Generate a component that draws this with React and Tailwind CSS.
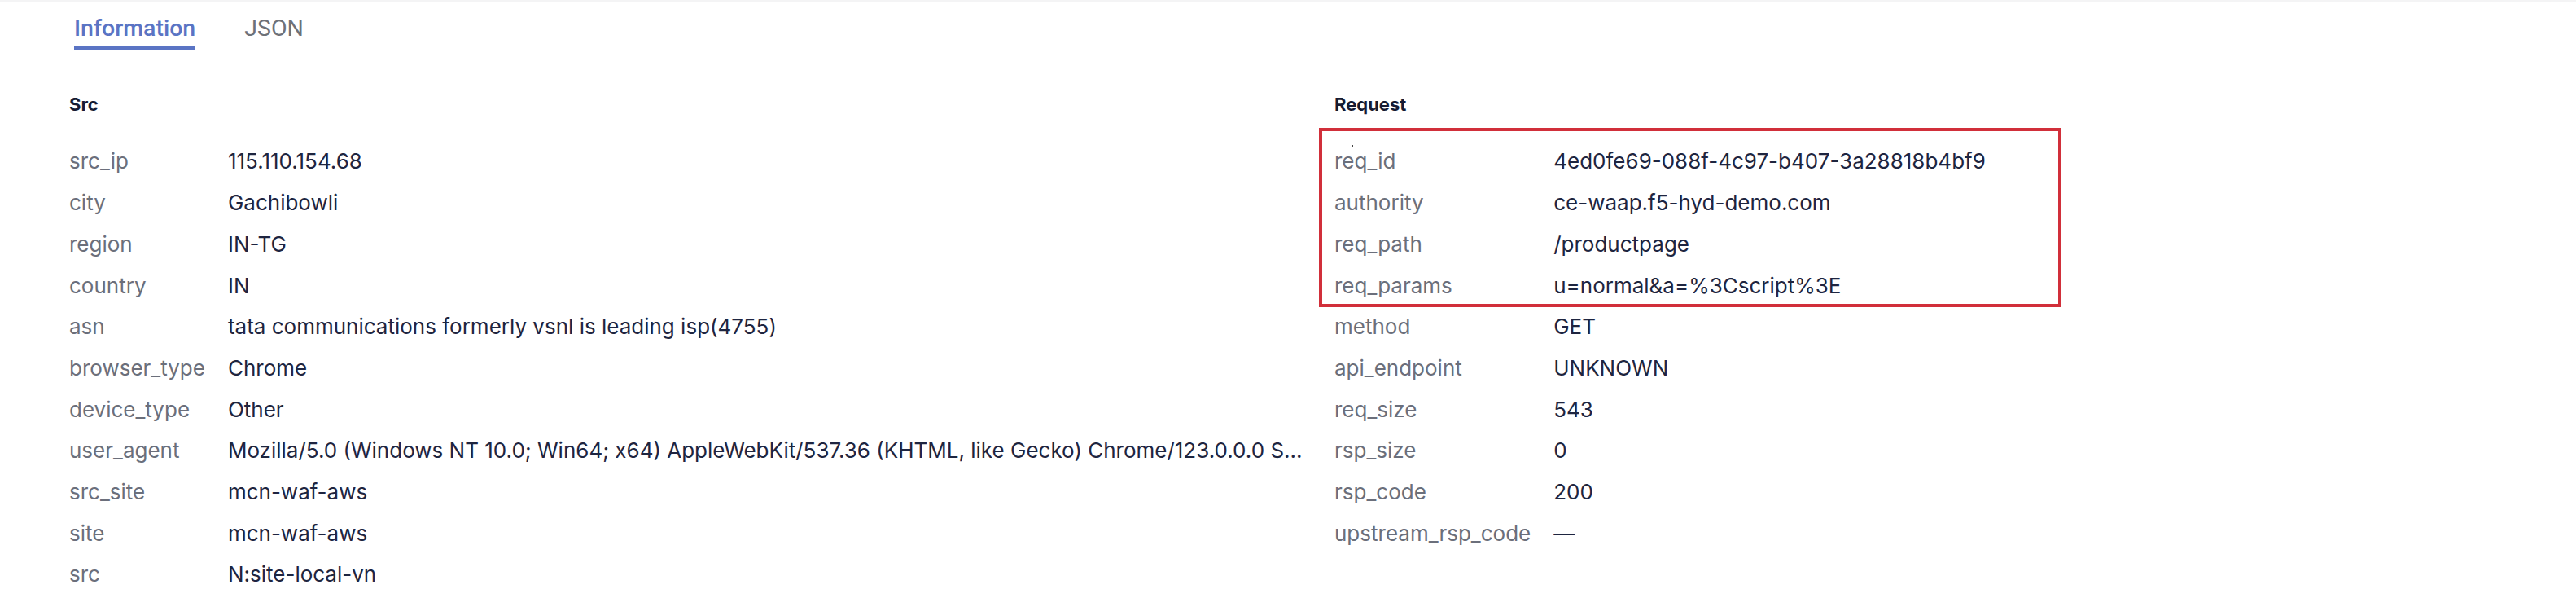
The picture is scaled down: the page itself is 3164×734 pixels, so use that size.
import React from 'react';

const srcRows = [
  ['src_ip', '115.110.154.68'],
  ['city', 'Gachibowli'],
  ['region', 'IN-TG'],
  ['country', 'IN'],
  ['asn', 'tata communications formerly vsnl is leading isp(4755)'],
  ['browser_type', 'Chrome'],
  ['device_type', 'Other'],
  ['user_agent', 'Mozilla/5.0 (Windows NT 10.0; Win64; x64) AppleWebKit/537.36 (KHTML, like Gecko) Chrome/123.0.0.0 S...'],
  ['src_site', 'mcn-waf-aws'],
  ['site', 'mcn-waf-aws'],
  ['src', 'N:site-local-vn'],
];

const requestRows = [
  ['req_id', '4ed0fe69-088f-4c97-b407-3a28818b4bf9'],
  ['authority', 'ce-waap.f5-hyd-demo.com'],
  ['req_path', '/productpage'],
  ['req_params', 'u=normal&a=%3Cscript%3E'],
  ['method', 'GET'],
  ['api_endpoint', 'UNKNOWN'],
  ['req_size', '543'],
  ['rsp_size', '0'],
  ['rsp_code', '200'],
  ['upstream_rsp_code', '—'],
];

function InfoTable({ rows }) {
  return (
    <div className="grid grid-cols-[auto_1fr] auto-rows-[50.7px] items-center gap-x-[28px] text-[26px] font-['Inter',sans-serif]">
      {rows.map(([label, value]) => (
        <React.Fragment key={label}>
          <div className="text-[#6b6f7b] whitespace-nowrap">{label}</div>
          <div className="text-[#1e2540] whitespace-nowrap">{value}</div>
        </React.Fragment>
      ))}
    </div>
  );
}

function Section({ title, rows, children }) {
  return (
    <div className="relative">
      <h3 className="text-[22px] leading-[28px] font-bold text-[#161b33] font-['Inter',sans-serif]">{title}</h3>
      <div className="relative mt-[30.6px]">
        {children}
        <InfoTable rows={rows} />
      </div>
    </div>
  );
}

export default function App() {
  return (
    <div className="w-[3164px] h-[734px] bg-white overflow-hidden">
      <div className="h-[3px] bg-[#f4f4f5]" />

      {/* tabs */}
      <div className="flex gap-[60px] pl-[91px] font-['Roboto',sans-serif] text-[28.5px] leading-[32px]">
        <button className="pt-[16px] pb-[6px] border-b-4 border-[#5a74c4] text-[#5a74c4] font-medium">
          Information
        </button>
        <button className="pt-[16px] pb-[10px] text-[#6e7178]">JSON</button>
      </div>

      <div className="flex pl-[85px] mt-[53px] gap-[36px]">
        <div className="w-[1518px] shrink-0">
          <Section title="Src" rows={srcRows} />
        </div>
        <div className="w-[1000px] shrink-0">
          <Section title="Request" rows={requestRows}>
            {/* highlight annotation */}
            <div className="absolute left-[-19px] top-[-15.6px] w-[912px] h-[220px] border-4 border-[#d12f3a] pointer-events-none" />
            <span className="absolute left-[21px] top-[5px] w-[2px] h-[2px] bg-[#444]" />
          </Section>
        </div>
      </div>
    </div>
  );
}
